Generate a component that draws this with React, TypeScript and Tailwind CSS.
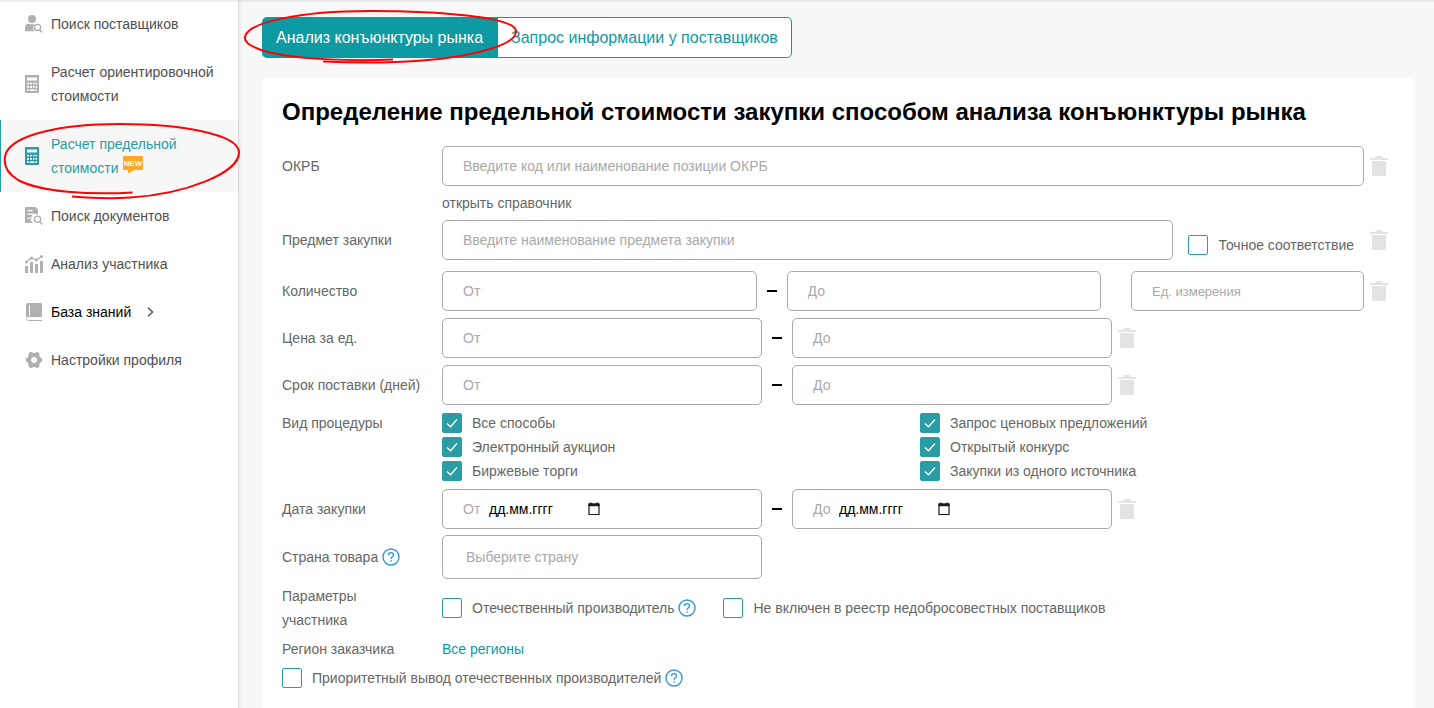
import React, { useId, useState } from "react";

type IconProps = { className?: string };

function PersonSearchIcon({ className }: IconProps) {
  return (
    <svg className={className} width="18" height="18" viewBox="0 0 18 18" fill="currentColor" aria-hidden="true">
      <ellipse cx="7" cy="4.100" rx="4" ry="4.100" />
      <path d="M0 16v-3.500C0 10.200 1.500 8.600 3.500 8.400c2 1.200 5 1.200 7 0l.4.200a4.600 4.600 0 0 0-2.300 6.600L10 16.300H.5z" />
      <circle cx="12.500" cy="12.400" r="3.100" fill="none" stroke="currentColor" strokeWidth="1.300" />
      <path d="M14.600 14.700l2.500 2.700" stroke="currentColor" strokeWidth="1.500" />
    </svg>
  );
}

function CalculatorIcon({ className }: IconProps) {
  return (
    <svg className={className} width="18" height="18" viewBox="0 0 18 18" aria-hidden="true">
      <path
        fill="currentColor"
        fillRule="evenodd"
        d="M1 0h12a1 1 0 0 1 1 1v16a1 1 0 0 1-1 1H1a1 1 0 0 1-1-1V1a1 1 0 0 1 1-1zM2 2.500v3h10v-3zM2 7.800v1.700h2V7.800zM5 7.800v1.700h2V7.800zM8 7.800v1.700h1.500V7.800zM10.500 7.800v1.700H12V7.800zM2 11v1.700h2V11zM5 11v1.700h2V11zM8 11v1.700h1.500V11zM10.500 11v1.700H12V11zM2 14.200v1.700h2v-1.700zM5 14.200v1.700h4.500v-1.700zM10.500 14.200v1.700H12v-1.700z"
      />
    </svg>
  );
}

function DocumentSearchIcon({ className }: IconProps) {
  return (
    <svg className={className} width="18" height="18" viewBox="0 0 18 18" aria-hidden="true">
      <path
        fill="currentColor"
        fillRule="evenodd"
        d="M1 0h9.500L13 2.500v5.300a4.700 4.700 0 0 0-5 8.200H1a1 1 0 0 1-1-1V1a1 1 0 0 1 1-1zM2.500 3v1.300h5V3zM2.500 6.500v1.300h7V6.500zM2.500 10.500v1.300h4.200v-1.300z"
      />
      <circle cx="12.500" cy="12.300" r="3.100" fill="none" stroke="currentColor" strokeWidth="1.300" />
      <path d="M14.700 14.600l2.700 2.900" stroke="currentColor" strokeWidth="1.500" />
    </svg>
  );
}

function ChartIcon({ className }: IconProps) {
  return (
    <svg className={className} width="18" height="18" viewBox="0 0 18 18" fill="currentColor" aria-hidden="true">
      <path d="M0 11h3v7H0zM5 7h3v11H5zM10 9h3v9h-3zM15 6h3v12h-3z" />
      <path d="M1.500 7l4.800-4 5.200 1.800L16.500 1.500" fill="none" stroke="currentColor" strokeWidth="1.200" />
      <circle cx="1.500" cy="7" r="1.500" />
      <circle cx="6.300" cy="3" r="1.500" />
      <circle cx="11.500" cy="5" r="1.500" />
      <circle cx="16.500" cy="1.500" r="1.500" />
    </svg>
  );
}

function BookIcon({ className }: IconProps) {
  return (
    <svg className={className} width="18" height="18" viewBox="0 0 18 18" aria-hidden="true">
      <path fill="currentColor" d="M3 0h13a1 1 0 0 1 1 1v13H3a2 2 0 0 0-2 1V2a2 2 0 0 1 2-2z" />
      <path d="M4.500 2v11" stroke="white" strokeWidth="1" />
      <path d="M1.500 15.500c0 1.200.7 2 2 2H17" fill="none" stroke="currentColor" strokeWidth="1" />
    </svg>
  );
}

function GearIcon({ className }: IconProps) {
  return (
    <svg className={className} width="18" height="18" viewBox="0 0 18 18" aria-hidden="true">
      <g fill="currentColor">
        <circle cx="9" cy="9" r="6.900" />
        <circle cx="2.900" cy="9" r="2.300" />
        <circle cx="15.100" cy="9" r="2.300" />
        <circle cx="5.900" cy="3.300" r="2.400" />
        <circle cx="12.100" cy="3.300" r="2.400" />
        <circle cx="5.900" cy="14.700" r="2.400" />
        <circle cx="12.100" cy="14.700" r="2.400" />
      </g>
      <circle cx="9" cy="9" r="2.900" fill="white" />
    </svg>
  );
}

function TrashButton({ label }: { label: string }) {
  return (
    <button type="button" aria-label={label} className="flex w-[30px] shrink-0 pl-1.5 text-[#e3e3e3]">
      <svg width="18" height="20" viewBox="0 0 18 20" fill="currentColor" aria-hidden="true">
        <path d="M0 2h5l.6-1.200Q6 0 7 0h4q1 0 1.400.8L13 2h5v2H0z" />
        <path d="M2 5h14v13.500a1.500 1.500 0 0 1-1.500 1.500h-11A1.500 1.500 0 0 1 2 18.500z" />
      </svg>
    </button>
  );
}

function HelpIcon() {
  return (
    <button type="button" aria-label="Подсказка" className="shrink-0 text-[#3498db]">
      <svg width="18" height="18" viewBox="0 0 18 18" fill="none" stroke="currentColor" aria-hidden="true">
        <circle cx="9" cy="9" r="8" strokeWidth="1.400" />
        <path d="M6.500 7.200c0-1.500 1-2.500 2.500-2.500s2.500.9 2.500 2.200c0 1.800-2.400 1.900-2.400 4" strokeWidth="1.300" />
        <path d="M9.100 12.300v1.500" strokeWidth="1.400" />
      </svg>
    </button>
  );
}

function Check({ label, checked = false }: { label: string; checked?: boolean }) {
  const [on, setOn] = useState(checked);
  return (
    <label className="flex items-center gap-2.5">
      <span className="grid size-5 shrink-0">
        <input
          type="checkbox"
          checked={on}
          onChange={() => setOn(!on)}
          className="col-start-1 row-start-1 size-5 appearance-none rounded-xs border border-[#2a9ca4] bg-white checked:bg-[#2a9ca4]"
        />
        {on && (
          <svg
            className="pointer-events-none col-start-1 row-start-1"
            width="20"
            height="20"
            viewBox="0 0 20 20"
            fill="none"
            stroke="white"
            strokeWidth="1.300"
            aria-hidden="true"
          >
            <path d="M5 10.500l3.500 3.300L15 6.500" />
          </svg>
        )}
      </span>
      {label}
    </label>
  );
}

const field =
  "h-10 min-w-0 rounded-[5px] border border-[#a9a9a9] bg-white px-5 text-[#666] placeholder:text-[#a9a9a9]";

function Dash() {
  return (
    <span className="flex w-[30px] shrink-0 justify-center" aria-hidden="true">
      <span className="h-0.5 w-2.5 bg-black" />
    </span>
  );
}

function Row({
  label,
  htmlFor,
  help,
  className = "items-center",
  children,
}: {
  label: string;
  htmlFor?: string;
  help?: boolean;
  className?: string;
  children: React.ReactNode;
}) {
  return (
    <div className={`flex ${className}`}>
      <div className="flex w-40 shrink-0 items-center gap-1 pr-5">
        {htmlFor ? <label htmlFor={htmlFor}>{label}</label> : <span>{label}</span>}
        {help && <HelpIcon />}
      </div>
      <div className="flex min-w-0 flex-1 items-center">{children}</div>
    </div>
  );
}

function RangeRow({ label }: { label: string }) {
  const id = useId();
  return (
    <Row label={label} htmlFor={id}>
      <input id={id} className={`${field} w-80`} placeholder="От" />
      <Dash />
      <input aria-label={`${label}, до`} className={`${field} w-80`} placeholder="До" />
      <TrashButton label={`Очистить: ${label}`} />
    </Row>
  );
}

function DateField({ id, prefix }: { id: string; prefix: string }) {
  return (
    <div className={`${field} flex w-80 items-center`}>
      <label htmlFor={id} className="w-[26px] shrink-0 text-[#a9a9a9]">
        {prefix}
      </label>
      <input id={id} placeholder="дд.мм.гггг" className="w-[98px] text-black placeholder:text-black" />
      <button type="button" aria-label="Открыть календарь" className="text-[#1a1a1a]">
        <svg width="14" height="14" viewBox="0 0 14 14" aria-hidden="true">
          <path d="M2 2h10v10.500H2z" fill="none" stroke="currentColor" strokeWidth="1.200" />
          <path d="M1.500 1.500h11V4.200h-11zM3 .5h1.500V2H3zM9.500.5H11V2H9.500z" fill="currentColor" />
        </svg>
      </button>
    </div>
  );
}

const menu = [
  { text: "Поиск поставщиков", Icon: PersonSearchIcon },
  { text: "Расчет ориентировочной стоимости", Icon: CalculatorIcon },
  { text: "Расчет предельной стоимости", Icon: CalculatorIcon, active: true },
  { text: "Поиск документов", Icon: DocumentSearchIcon },
  { text: "Анализ участника", Icon: ChartIcon },
  { text: "База знаний", Icon: BookIcon, nested: true },
  { text: "Настройки профиля", Icon: GearIcon },
];

function Sidebar() {
  return (
    <nav className="relative w-[239px] shrink-0 border-r border-[#dcdcdc] bg-white shadow-[1px_0_4px_rgba(0,0,0,0.08)]">
      <ul>
        {menu.map(({ text, Icon, active, nested }) => (
          <li key={text}>
            <a
              href="#"
              className={`flex items-center py-3 pr-5 pl-6 ${
                active
                  ? "border-l border-[#2a9ca4] bg-[#f7f7f7] text-[#2a9ca4]"
                  : nested
                    ? "border-l border-transparent text-black"
                    : "border-l border-transparent text-[#4f4f4f]"
              }`}
            >
              <Icon className={`mr-2 shrink-0 ${active ? "" : "text-[#b0b0b0]"}`} />
              <span>
                {text}
                {active && (
                  <svg className="ml-1 inline-block align-[-1px]" width="21" height="18" viewBox="0 0 21 18" aria-label="NEW">
                    <path d="M1 0h18a1 1 0 0 1 1 1v12a1 1 0 0 1-1 1h-7.500L5 17.500V14H1a1 1 0 0 1-1-1V1a1 1 0 0 1 1-1z" fill="#ffa726" />
                    <text x="10" y="9.500" textAnchor="middle" fontSize="8" fontWeight="700" fill="white">
                      NEW
                    </text>
                  </svg>
                )}
              </span>
              {nested && (
                <svg className="ml-4" width="7" height="10" viewBox="0 0 7 10" fill="none" stroke="#555" strokeWidth="1.500" aria-hidden="true">
                  <path d="M1 .7L5.500 5 1 9.300" />
                </svg>
              )}
            </a>
          </li>
        ))}
      </ul>
      <svg
        className="pointer-events-none absolute top-[120px] left-0 z-10"
        width="244"
        height="84"
        viewBox="0 120 244 84"
        fill="none"
        stroke="#fa0505"
        strokeWidth="2"
        aria-hidden="true"
      >
        <path d="M132.500 192.500C90 195 40 192 18 180C5 172 3 162 6 153C14 135 60 124 120 124C180 124 238 134 239 152C240 173 185 194 130 197.500C110 199 90 198 72 196.500" />
      </svg>
    </nav>
  );
}

export default function App() {
  return (
    <div className="relative flex min-h-screen bg-[#f8f8f8] font-['Liberation_Sans',Arial,sans-serif] text-sm leading-6 text-[#666]">
      <div className="pointer-events-none absolute inset-x-0 top-0 z-10 h-[3px] bg-linear-to-b from-black/8 to-transparent" aria-hidden="true" />
      <Sidebar />
      <main className="flex min-w-0 flex-1 flex-col pt-[17px] pr-5 pl-[23px]">
        <div className="relative flex w-fit text-base">
          <button type="button" className="h-[41px] rounded-l-[5px] border-r border-[#0e9aa3] bg-[#0e9aa3] px-3.5 text-white">
            Анализ конъюнктуры рынка
          </button>
          <button type="button" className="h-[41px] rounded-r-[5px] border border-l-0 border-[#0e9aa3] bg-white px-[13px] text-[#0e9aa3]">
            Запрос информации у поставщиков
          </button>
          <svg
            className="pointer-events-none absolute -top-[11px] -left-[22px]"
            width="284"
            height="64"
            viewBox="240 6 284 64"
            fill="none"
            stroke="#fa0505"
            strokeWidth="2"
            aria-hidden="true"
          >
            <path d="M393 59.500C350 61.500 295 59 268 52C250 47 244 42 245 37C248 22 300 11 370 11C440 11 515 17 516 31C517 47 460 60 395 62C370 63 345 62.500 323 61.500" />
          </svg>
        </div>

        <form className="mt-5 flex-1 rounded-t-[5px] bg-white p-5 pb-4">
          <h1 className="text-2xl leading-7 font-bold text-black">
            Определение предельной стоимости закупки способом анализа конъюнктуры рынка
          </h1>

          <div className="mt-5 flex flex-col gap-[7px]">
            <Row label="ОКРБ" htmlFor="okrb">
              <input id="okrb" className={`${field} flex-1`} placeholder="Введите код или наименование позиции ОКРБ" />
              <TrashButton label="Очистить: ОКРБ" />
            </Row>
            <div className="-my-[2px] ml-40">
              <a href="#">открыть справочник</a>
            </div>
            <div className="mb-1">
              <Row label="Предмет закупки" htmlFor="subject">
                <input id="subject" className={`${field} mr-[15px] flex-1`} placeholder="Введите наименование предмета закупки" />
                <div className="mr-2.5 pt-2.5">
                  <Check label="Точное соответствие" />
                </div>
                <TrashButton label="Очистить: Предмет закупки" />
              </Row>
            </div>
            <Row label="Количество" htmlFor="amount">
              <input id="amount" className={`${field} flex-1`} placeholder="От" />
              <Dash />
              <input aria-label="Количество, до" className={`${field} flex-1`} placeholder="До" />
              <input aria-label="Единица измерения" className={`${field} ml-[30px] w-[233px] text-[13px]`} placeholder="Ед. измерения" />
              <TrashButton label="Очистить: Количество" />
            </Row>
            <RangeRow label="Цена за ед." />
            <RangeRow label="Срок поставки (дней)" />
          </div>

          <div className="mt-1.5">
            <Row label="Вид процедуры" className="items-start">
              <div className="grid flex-1 grid-flow-col grid-cols-2 grid-rows-3 gap-x-1">
                <Check label="Все способы" checked />
                <Check label="Электронный аукцион" checked />
                <Check label="Биржевые торги" checked />
                <Check label="Запрос ценовых предложений" checked />
                <Check label="Открытый конкурс" checked />
                <Check label="Закупки из одного источника" checked />
              </div>
            </Row>
          </div>

          <div className="mt-1.5 flex flex-col gap-1.5">
            <Row label="Дата закупки" htmlFor="date-from">
              <DateField id="date-from" prefix="От" />
              <Dash />
              <DateField id="date-to" prefix="До" />
              <TrashButton label="Очистить: Дата закупки" />
            </Row>
            <Row label="Страна товара" htmlFor="country" help>
              <input
                id="country"
                className="h-11 w-80 rounded-[5px] border border-[#a9a9a9] px-[23px] text-[#666] placeholder:text-[#a9a9a9]"
                placeholder="Выберите страну"
              />
            </Row>
          </div>

          <div className="mt-[5px] flex flex-col gap-[5px]">
            <Row label="Параметры участника">
              <div className="mr-[27px] flex items-center gap-1">
                <Check label="Отечественный производитель" />
                <HelpIcon />
              </div>
              <Check label="Не включен в реестр недобросовестных поставщиков" />
            </Row>
            <Row label="Регион заказчика">
              <a href="#" className="text-[#0e9aa3]">
                Все регионы
              </a>
            </Row>
            <div className="flex items-center gap-1">
              <Check label="Приоритетный вывод отечественных производителей" />
              <HelpIcon />
            </div>
          </div>
        </form>
      </main>
    </div>
  );
}
